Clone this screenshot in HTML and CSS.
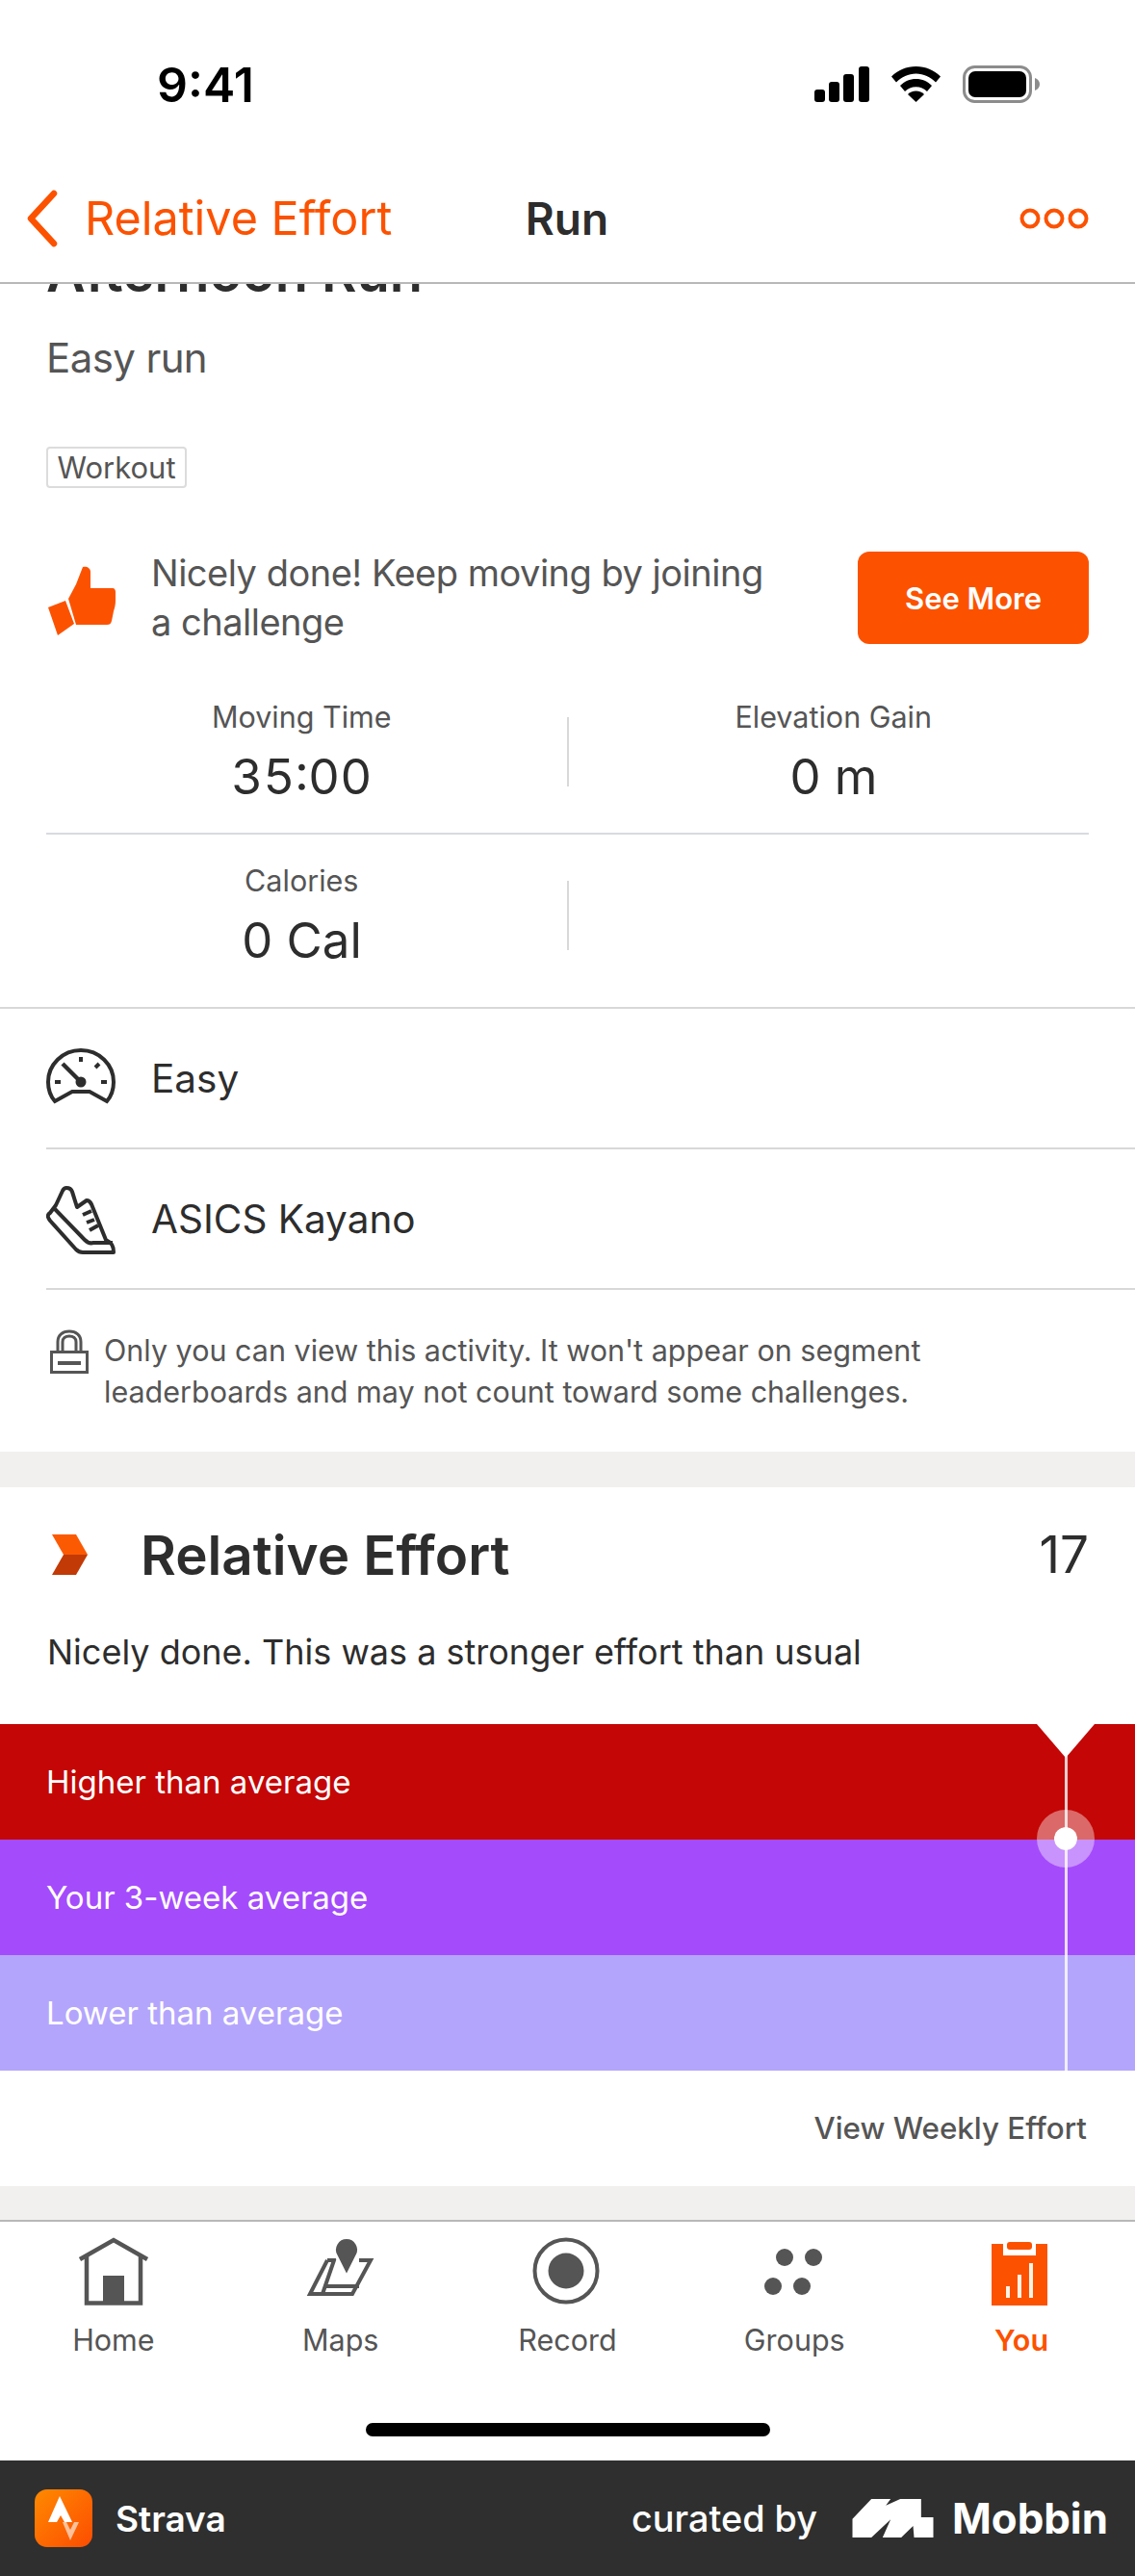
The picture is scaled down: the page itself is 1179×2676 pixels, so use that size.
FILE: index.html
```html
<!DOCTYPE html>
<html lang="en">
<head>
    <meta charset="UTF-8">
    <meta name="viewport" content="width=device-width, initial-scale=1.0">
    <title>Run</title>
    <link rel="stylesheet" href="styles.css">
</head>
<body>
<div class="screen">
    <div class="status">
        <span class="time">9:41</span>
        <div class="status-icons">
            <svg class="signal" viewBox="0 0 57 37">
                <rect x="0" y="24" width="11" height="13" rx="3"/>
                <rect x="15" y="16" width="11" height="21" rx="3"/>
                <rect x="30" y="8" width="11" height="29" rx="3"/>
                <rect x="46" y="0" width="11" height="37" rx="3"/>
            </svg>
            <svg class="wifi" viewBox="0 0 51 37">
                <path d="M25.5 0C15.5 0 7 3.8 0 10.5l5 6C10.5 11 17.500 7.500 25.500 7.500S40.500 11 46 16.500l5-6C44 3.800 35.500 0 25.500 0z"/>
                <path d="M25.500 13C19 13 13.500 15.500 9 20l5 6c3-3 7-4.800 11.500-4.800S34 23 37 26l5-6c-4.500-4.500-10-7-16.500-7z"/>
                <path d="M25.500 25.500c-3.500 0-6.500 1.200-8.500 3.500l8.500 8 8.500-8c-2-2.300-5-3.500-8.500-3.500z"/>
            </svg>
            <svg class="battery" viewBox="0 0 80 39">
                <rect x="1.500" y="1.500" width="69" height="36" rx="11" fill="none" stroke="#8c8c8c" stroke-width="3"/>
                <rect x="6" y="6" width="60" height="27" rx="7"/>
                <path d="M75 13c3 1 5 3.500 5 6.500s-2 5.500-5 6.500z" fill="#8c8c8c"/>
            </svg>
        </div>
    </div>

    <header class="nav">
        <div class="nav-back">
            <svg class="back-icon" viewBox="0 0 34 60"><path d="M29 4L5 30l24 26" fill="none" stroke="#fc5200" stroke-width="6.500" stroke-linecap="round" stroke-linejoin="round"/></svg>
            <span>Relative Effort</span>
        </div>
        <div class="nav-title">Run</div>
        <svg class="more-icon" viewBox="0 0 72 22">
            <circle cx="11" cy="11" r="8.500"/>
            <circle cx="36" cy="11" r="8.500"/>
            <circle cx="61" cy="11" r="8.500"/>
        </svg>
    </header>

    <main class="content">
        <section class="summary">
            <div class="summary-top">
                <h1 class="activity-name">Afternoon Run</h1>
                <p class="activity-desc">Easy run</p>
                <span class="tag">Workout</span>
                <div class="promo">
                    <svg class="thumb" viewBox="0 0 70 72">
                        <path d="M0 43L18 36 27 60 10 72z"/>
                        <path d="M29 19L36 1c4-1 8 1 8 5v17h23c2 0 3 2 3 4v9c0 4-1 8-2 11l-2 10c-1 3-2 4-5 4H29L21 34z"/>
                    </svg>
                    <p class="promo-text">Nicely done! Keep moving by joining a challenge</p>
                    <button class="promo-btn">See More</button>
                </div>
            </div>
            <div class="stat-row first">
                <div class="stat">
                    <div class="stat-label">Moving Time</div>
                    <div class="stat-value">35:00</div>
                </div>
                <div class="stat-divider"></div>
                <div class="stat">
                    <div class="stat-label">Elevation Gain</div>
                    <div class="stat-value">0 m</div>
                </div>
            </div>
            <div class="stat-row">
                <div class="stat">
                    <div class="stat-label">Calories</div>
                    <div class="stat-value">0 Cal</div>
                </div>
                <div class="stat-divider"></div>
                <div class="stat"></div>
            </div>
        </section>

        <section class="details">
            <div class="detail-row">
                <svg class="detail-icon" viewBox="0 -3 72 74" fill="none" stroke="#2d2d2d" stroke-width="4">
                    <path d="M9 58C3 51 2 44 2 38 2 20 17 5 36 5s34 15 34 33c0 6-1 13-7 20L45 48H27z"/>
                    <path d="M17 19l19 19" stroke-width="4.500"/>
                    <circle cx="36" cy="38" r="3.500" fill="#2d2d2d"/>
                    <path d="M36 12v5M9 38h6M57 38h6M55 19l-4 4"/>
                </svg>
                <span>Easy</span>
            </div>
            <div class="detail-row">
                <svg class="detail-icon" viewBox="0 -1 72 74" fill="none" stroke="#2d2d2d" stroke-width="4" stroke-linejoin="round">
                    <path d="M21 4c3 0 5 1 6 4l5 16 10-7c2 0 4 2 5 4l15 37c6 3 8 6 8 13H38c-3 0-5-1-7-3L4 38c-3-4-3-6 0-8l6-8 7-15c1-2 2-3 4-3z"/>
                    <path d="M9 26l31 32c3 3 6 4 9 3h20"/>
                    <path d="M38 32l9-4M42 40l8-3M45 48l9-5"/>
                </svg>
                <span>ASICS Kayano</span>
            </div>
        </section>

        <section class="privacy">
            <svg class="lock" viewBox="0 0 40 46" fill="none" stroke="#555" stroke-width="3">
                <path d="M8 23V13C8 6 13 2 20 2s12 4 12 11v10"/>
                <path d="M13 23V13c0-4 3-6 7-6s7 2 7 6v10"/>
                <rect x="1.500" y="23.500" width="37" height="21"/>
                <path d="M8 35h24" stroke-width="4"/>
            </svg>
            <p>Only you can view this activity. It won't appear on segment leaderboards and may not count toward some challenges.</p>
        </section>

        <section class="effort">
            <div class="effort-head">
                <svg class="effort-icon" viewBox="0 0 37 42">
                    <path d="M0 0h25l12 21H12z" fill="#fc5a02"/>
                    <path d="M12 21h25L25 42H0z" fill="#c23a06"/>
                </svg>
                <h2>Relative Effort</h2>
                <span class="effort-score">17</span>
            </div>
            <p class="effort-desc">Nicely done. This was a stronger effort than usual</p>
            <div class="bands">
                <div class="band high">Higher than average</div>
                <div class="band mid">Your 3-week average</div>
                <div class="band low">Lower than average</div>
                <div class="marker-line"></div>
                <div class="marker-tip"></div>
                <div class="marker-dot"></div>
            </div>
            <div class="effort-link">View Weekly Effort</div>
        </section>
    </main>

    <nav class="tabbar">
        <div class="tabs">
            <div class="tab">
                <svg viewBox="0 0 76 76" fill="none" stroke="#555" stroke-width="4.500">
                    <path d="M3 25L38 5l35 20"/>
                    <path d="M10 21v49.500h56V21"/>
                    <rect x="27" y="42" width="22" height="29" fill="#555" stroke="none"/>
                </svg>
                <span>Home</span>
            </div>
            <div class="tab">
                <svg viewBox="0 0 76 76" fill="none" stroke="#555" stroke-width="4">
                    <path d="M24 26H31L19 61M57 26H69L50 61H6L24 26"/>
                    <path d="M23 53H57"/>
                    <path d="M44 43L33 21a12.500 12.500 0 1 1 22 0z" fill="#555" stroke="#fff" stroke-width="3"/>
                </svg>
                <span>Maps</span>
            </div>
            <div class="tab">
                <svg viewBox="0 0 76 76">
                    <circle cx="37" cy="37" r="32.500" fill="none" stroke="#555" stroke-width="4"/>
                    <circle cx="37" cy="37" r="18.500" fill="#555"/>
                </svg>
                <span>Record</span>
            </div>
            <div class="tab">
                <svg viewBox="0 0 76 76" fill="#555">
                    <circle cx="28" cy="23" r="9"/>
                    <circle cx="58" cy="23" r="9"/>
                    <circle cx="16" cy="53" r="9"/>
                    <circle cx="46" cy="53" r="9"/>
                </svg>
                <span>Groups</span>
            </div>
            <div class="tab active">
                <svg viewBox="0 0 76 76">
                    <rect x="7" y="9" width="58" height="64" fill="#fc5200"/>
                    <rect x="19" y="5" width="34" height="16" fill="#fff"/>
                    <rect x="23" y="7" width="26" height="8" rx="3" fill="#fc5200"/>
                    <rect x="22" y="53" width="4" height="12" fill="#fff3e4"/>
                    <rect x="34" y="41" width="4" height="24" fill="#fff3e4"/>
                    <rect x="46" y="29" width="4" height="36" fill="#fff3e4"/>
                </svg>
                <span>You</span>
            </div>
        </div>
        <div class="home-indicator"></div>
    </nav>

    <footer class="footer">
        <div class="footer-app">
            <svg class="app-logo" viewBox="0 0 60 60">
                <defs>
                    <linearGradient id="appgrad" x1="0" y1="0" x2="1" y2="1">
                        <stop offset="0" stop-color="#ff8a00"/>
                        <stop offset="1" stop-color="#fc4c02"/>
                    </linearGradient>
                </defs>
                <rect width="60" height="60" rx="13" fill="url(#appgrad)"/>
                <path d="M26 7L14 34h9l4-7 4 7h8z" fill="#fff"/>
                <path d="M29 34l8 19 9-19h-5l-4 8-4-8z" fill="#fff" opacity="0.6"/>
            </svg>
            <span>Strava</span>
        </div>
        <div class="footer-credit">
            <span class="curated">curated by</span>
            <svg class="mobbin-logo" viewBox="716 108 252 120" fill="#fff">
                <path d="M716 170L775 108H835L820 128 865 108H930V165H968V228H908L905 192 868 228H810L835 172 775 228H716z"/>
            </svg>
            <span class="mobbin">Mobbin</span>
        </div>
    </footer>
</div>
</body>
</html>
```

FILE: styles.css
```css
*{
    box-sizing: border-box;
}
body{
    margin: 0;
    background: #fff;
    font-family: Inter, "Liberation Sans", sans-serif;
    color: #2d2d2d;
}
p,h1,h2{
    margin: 0;
}
.screen{
    width: 1179px;
    height: 2676px;
    display: flex;
    flex-direction: column;
    overflow: hidden;
}

/* status bar */
.status{
    height: 170px;
    flex: none;
    display: flex;
    justify-content: space-between;
    padding: 62px 99px 0 163px;
}
.time{
    font-size: 50px;
    font-weight: 600;
    line-height: 52px;
    color: #000;
}
.status-icons{
    display: flex;
    gap: 23px;
    height: 39px;
    margin-top: 6px;
}
.signal{
    width: 57px;
    height: 37px;
    margin-top: 1px;
}
.wifi{
    width: 51px;
    height: 37px;
    margin-top: 1px;
}
.battery{
    width: 80px;
    height: 39px;
}

/* nav */
.nav{
    height: 125px;
    flex: none;
    display: grid;
    grid-template-columns: 1fr auto 1fr;
    align-items: center;
    padding: 0 48px 10px 27px;
    border-bottom: 2px solid #b8b8b8;
    background: #fff;
}
.nav-back{
    display: flex;
    align-items: center;
    gap: 27px;
    font-size: 48.500px;
    color: #fc5200;
}
.back-icon{
    width: 34px;
    height: 60px;
}
.nav-title{
    font-size: 46px;
    font-weight: 600;
    margin-left: 20px;
}
.more-icon{
    width: 72px;
    height: 22px;
    justify-self: end;
    fill: none;
    stroke: #fc5200;
    stroke-width: 4;
}

/* scrolled content */
.content{
    flex: 1;
    overflow: hidden;
    background: #f1f0ee;
}
.summary{
    background: #fff;
    border-bottom: 2px solid #d8d8d8;
}
.summary-top{
    padding: 0 48px;
}
.activity-name{
    font-size: 56px;
    font-weight: 600;
    line-height: 60px;
    height: 60px;
    margin-top: -42px;
}
.activity-desc{
    font-size: 42px;
    letter-spacing: -0.6px;
    line-height: 50px;
    color: #555;
    margin-top: 34px;
}
.tag{
    display: block;
    width: 146px;
    height: 43px;
    margin-top: 67px;
    border: 2px solid #dcdcdc;
    border-radius: 4px;
    font-size: 31px;
    line-height: 39px;
    text-align: center;
    color: #555;
}
.promo{
    display: flex;
    align-items: center;
    height: 96px;
    margin-top: 66px;
}
.thumb{
    width: 70px;
    height: 72px;
    flex: none;
    fill: #fc5200;
    margin: 6px 37px 0 2px;
}
.promo-text{
    width: 660px;
    font-size: 38px;
    letter-spacing: -0.5px;
    line-height: 51px;
    color: #555;
}
.promo-btn{
    width: 240px;
    height: 96px;
    margin-left: auto;
    border: none;
    border-radius: 12px;
    background: #fc5200;
    color: #fff;
    font-family: inherit;
    font-size: 31px;
    font-weight: 600;
}
.stat-row{
    display: flex;
    margin: 0 48px;
    padding: 28px 0 39px;
}
.stat-row.first{
    margin-top: 40px;
    padding: 16px 0 28px;
    border-bottom: 2px solid #d8dadf;
}
.stat{
    flex: 1;
    text-align: center;
}
.stat-label{
    font-size: 30.500px;
    line-height: 40px;
    color: #555;
}
.stat-value{
    font-size: 51px;
    font-feature-settings: "tnum";
    line-height: 60px;
    margin-top: 12px;
}
.stat-divider{
    width: 2px;
    height: 72px;
    margin: 20px 10px 0;
    background: #d8d8d8;
}
.details{
    background: #fff;
}
.detail-row{
    display: flex;
    align-items: center;
    height: 146px;
    margin-left: 48px;
    border-bottom: 2px solid #d8d8d8;
    font-size: 40.500px;
}
.detail-icon{
    width: 72px;
    height: 74px;
    flex: none;
    margin-right: 37px;
}
.privacy{
    display: flex;
    background: #fff;
    padding: 41px 48px 41px 52px;
    height: 168px;
}
.lock{
    width: 40px;
    height: 46px;
    flex: none;
    margin-right: 16px;
}
.privacy p{
    font-size: 30.500px;
    line-height: 43px;
    color: #555;
    width: 900px;
}

/* relative effort card */
.effort{
    background: #fff;
    margin-top: 37px;
    padding-top: 40px;
}
.effort-head{
    display: flex;
    align-items: center;
    height: 60px;
    padding: 0 48px 0 54px;
}
.effort-icon{
    width: 37px;
    height: 42px;
    margin-right: 55px;
}
.effort-head h2{
    font-size: 56.500px;
    font-weight: 600;
}
.effort-score{
    margin-left: auto;
    font-size: 53px;
}
.effort-desc{
    font-size: 36px;
    line-height: 50px;
    margin: 46px 0 50px 49px;
}
.bands{
    position: relative;
}
.band{
    height: 120px;
    display: flex;
    align-items: center;
    padding-left: 48px;
    font-size: 33px;
    color: #fff;
}
.band.high{
    background: #c40606;
}
.band.mid{
    background: #a44bfc;
}
.band.low{
    background: #b4a5fc;
}
.marker-line{
    position: absolute;
    top: 30px;
    bottom: 0;
    left: 1106px;
    width: 3px;
    background: rgba(255,255,255,0.8);
}
.marker-tip{
    position: absolute;
    top: 0;
    left: 1077px;
    width: 60px;
    height: 35px;
    background: #fff;
    clip-path: polygon(0 0, 100% 0, 50% 100%);
}
.marker-dot{
    position: absolute;
    top: 89px;
    left: 1077px;
    width: 60px;
    height: 60px;
    border-radius: 50%;
    background: #fff;
    background-clip: content-box;
    padding: 18px;
    box-shadow: inset 0 0 0 18px rgba(255,255,255,0.4);
}
.effort-link{
    height: 120px;
    display: flex;
    align-items: center;
    justify-content: flex-end;
    padding-right: 50px;
    font-size: 31.300px;
    font-weight: 500;
    color: #555;
}

/* tab bar */
.tabbar{
    height: 250px;
    flex: none;
    background: #fff;
    border-top: 2px solid #b8b8b8;
}
.tabs{
    display: grid;
    grid-template-columns: repeat(5, 1fr);
    padding-top: 14px;
}
.tab{
    display: flex;
    flex-direction: column;
    align-items: center;
    font-size: 30.500px;
    line-height: 40px;
    color: #555;
}
.tab svg{
    width: 76px;
    height: 76px;
    margin-bottom: 13px;
}
.tab.active{
    color: #fc5200;
    font-weight: 600;
}
.home-indicator{
    width: 420px;
    height: 14px;
    margin: 66px auto 0;
    border-radius: 7px;
    background: #000;
}

/* footer */
.footer{
    height: 120px;
    flex: none;
    display: flex;
    align-items: center;
    justify-content: space-between;
    padding: 0 28px 0 36px;
    background: #2f2f2f;
    color: #fff;
}
.footer-app{
    display: flex;
    align-items: center;
    gap: 24px;
    font-size: 37px;
    font-weight: 600;
}
.app-logo{
    width: 60px;
    height: 60px;
}
.footer-credit{
    display: flex;
    align-items: center;
}
.curated{
    font-size: 37.800px;
    font-weight: 500;
    margin-right: 35px;
}
.mobbin-logo{
    width: 87px;
    height: 40px;
    margin-right: 18px;
}
.mobbin{
    font-size: 43.800px;
    font-weight: 700;
}
```
